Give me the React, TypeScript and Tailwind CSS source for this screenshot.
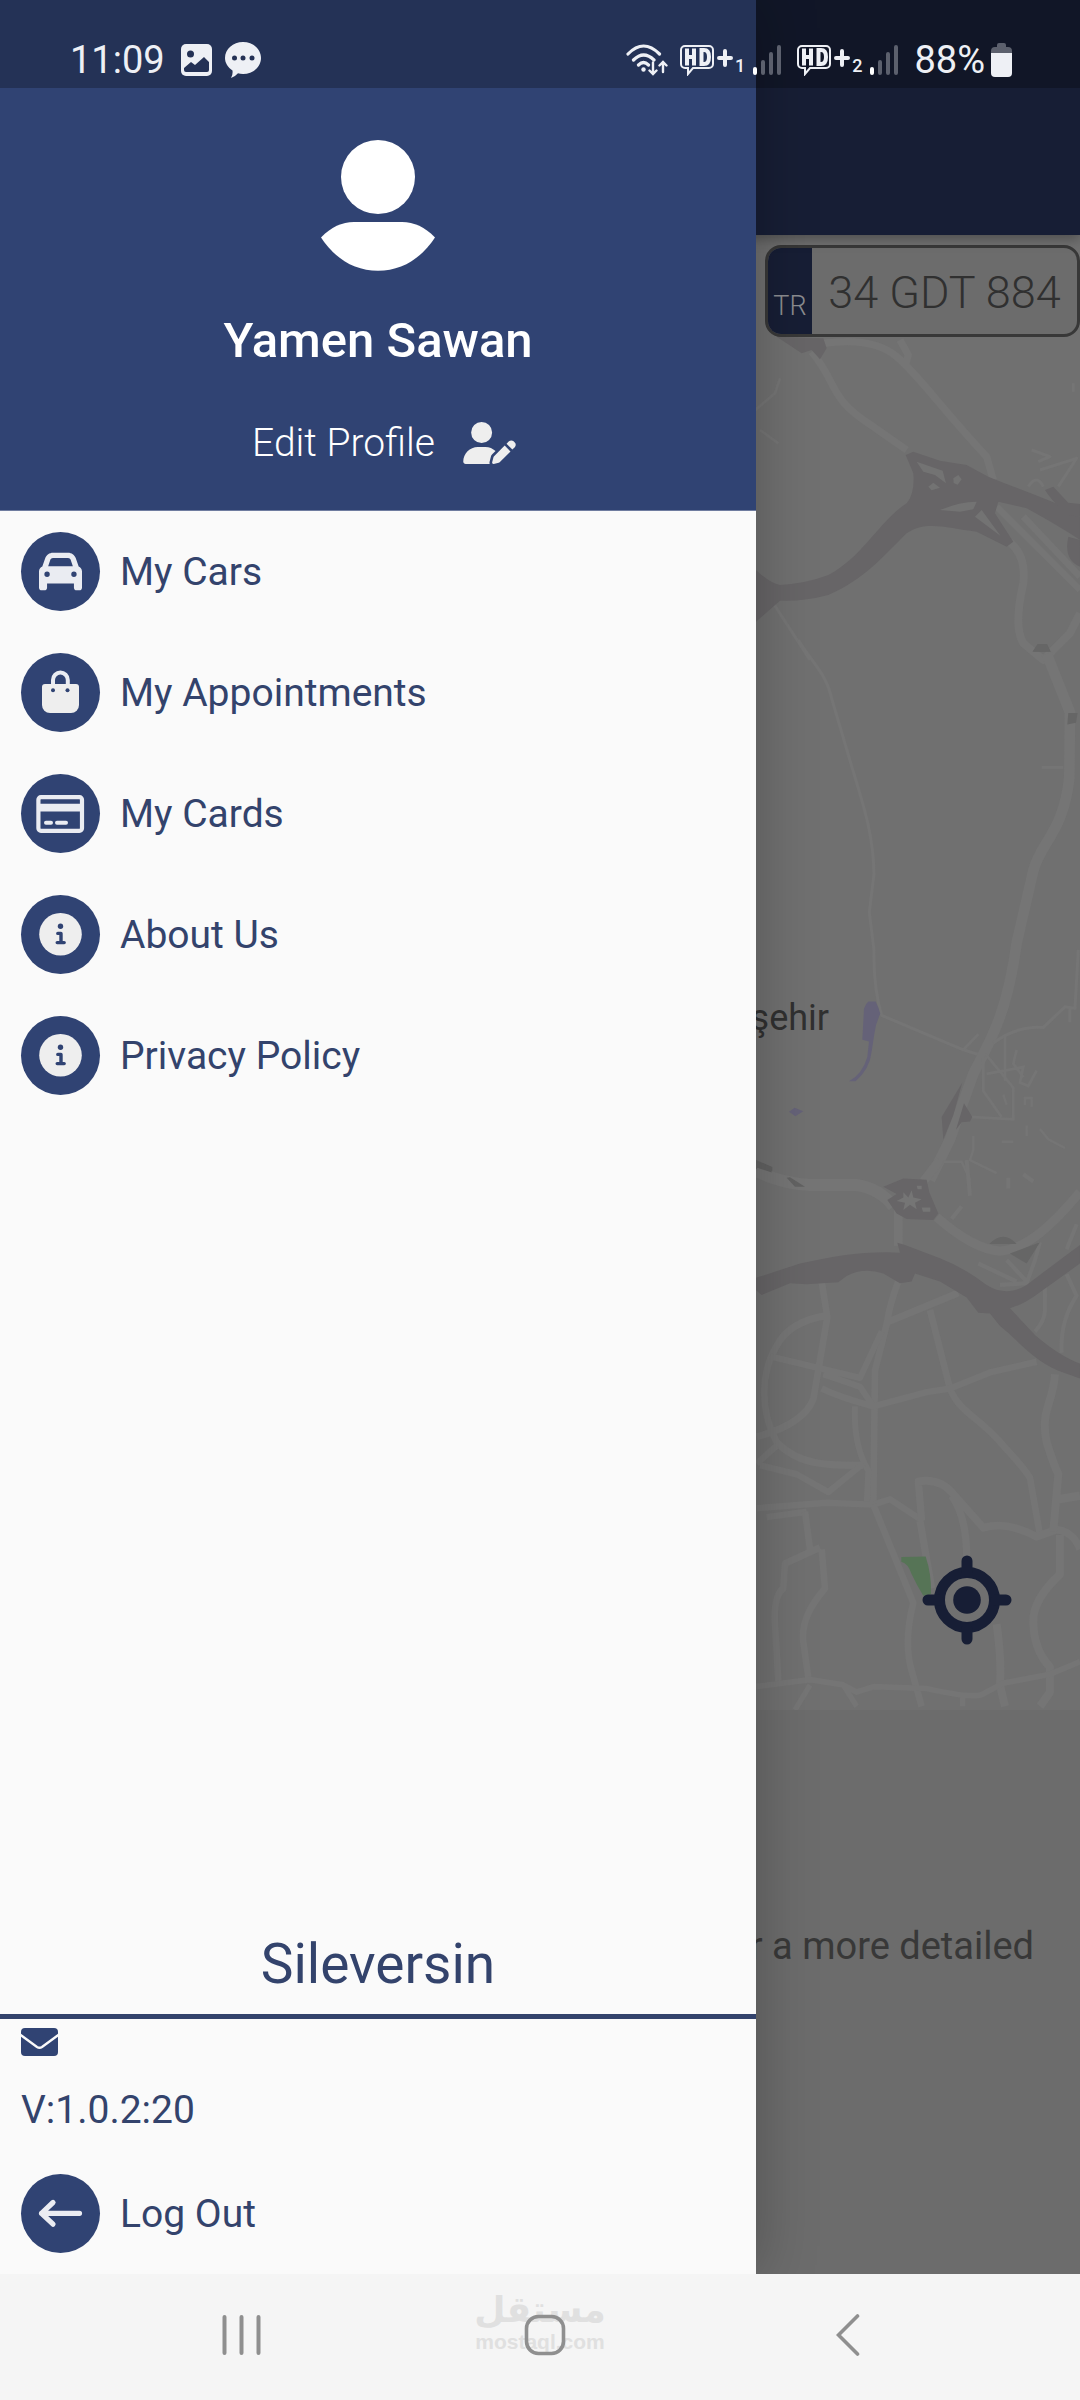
import type { ReactNode } from 'react';
import { FaCar, FaUserPen } from 'react-icons/fa6';

interface MenuItem {
  label: string;
  icon: ReactNode;
}

function BagIcon() {
  return (
    <svg viewBox="0 0 79 79" className="h-full w-full" aria-hidden="true">
      <path d="M32 33V27a7.4 7.4 0 0 1 14.8 0v6" fill="none" stroke="#eaecf2" strokeWidth="4" />
      <path d="M24 31h31a3 3 0 0 1 3 3v18a8 8 0 0 1-8 8H29a8 8 0 0 1-8-8V34a3 3 0 0 1 3-3z" fill="#eee" />
      <circle cx="32" cy="37.3" r="2" fill="#304373" />
      <circle cx="46.5" cy="37.3" r="2" fill="#304373" />
    </svg>
  );
}

function CardIcon() {
  return (
    <svg viewBox="0 0 79 79" className="h-full w-full" aria-hidden="true">
      <rect x="17.4" y="23.2" width="43.6" height="33.6" rx="2.5" fill="none" stroke="#eaecf2" strokeWidth="4.2" />
      <path d="M18 29.8h43v7.8H18z" fill="#eaecf2" />
      <path d="M25 48.8h5M36 48.8h9" stroke="#eaecf2" strokeWidth="4" strokeLinecap="round" />
    </svg>
  );
}

function InfoIcon() {
  return (
    <svg viewBox="0 0 79 79" className="h-full w-full" aria-hidden="true">
      <circle cx="39.5" cy="39.2" r="21.3" fill="#eee" />
      <circle cx="39.5" cy="31.3" r="2.7" fill="#304373" />
      <path
        d="M36.8 38.4h3.2v9M36.2 47.6h7"
        fill="none" stroke="#304373" strokeWidth="3.4"
        strokeLinecap="round" strokeLinejoin="round"
      />
    </svg>
  );
}

function BackArrowIcon() {
  return (
    <svg viewBox="0 0 79 79" className="h-full w-full" aria-hidden="true">
      <path
        d="M58.5 39.3H20.5M32 28.5L20.5 39.3L32 50.2"
        fill="none" stroke="#eaecf2" strokeWidth="5.2"
        strokeLinecap="round" strokeLinejoin="round"
      />
    </svg>
  );
}

const menuItems: MenuItem[] = [
  { label: 'My Cars', icon: <FaCar className="h-[43px] w-[43px] text-[#eaecf2]" /> },
  { label: 'My Appointments', icon: <BagIcon /> },
  { label: 'My Cards', icon: <CardIcon /> },
  { label: 'About Us', icon: <InfoIcon /> },
  { label: 'Privacy Policy', icon: <InfoIcon /> },
];

function MenuButton({ label, icon }: MenuItem) {
  return (
    <button className="flex items-center gap-5 text-left text-[39px] leading-[48px] text-[#33436c]">
      <span className="flex h-[79px] w-[79px] shrink-0 items-center justify-center rounded-full bg-[#304373]">
        {icon}
      </span>
      {label}
    </button>
  );
}

function SimSignal({ slot }: { slot: string }) {
  return (
    <div className="flex items-end">
      <svg viewBox="0 0 55 32" className="h-[32px] w-[55px]" aria-hidden="true">
        <path
          d="M5 2h24a4 4 0 0 1 4 4v14a4 4 0 0 1-4 4H13l-5 6v-6H5a4 4 0 0 1-4-4V6a4 4 0 0 1 4-4z"
          fill="none" stroke="#eef0f5" strokeWidth="2"
        />
        <path d="M7 4.500v17M14 4.500v17M7 13h7" stroke="#eef0f5" strokeWidth="4" />
        <path d="M21.500 6v14h2.500q5 0 5-7t-5-7z" fill="none" stroke="#eef0f5" strokeWidth="4" />
        <path d="M39 14h12M45 7v14" stroke="#eef0f5" strokeWidth="4" strokeLinecap="round" />
      </svg>
      <span className="text-[18px] font-medium leading-[20px]">{slot}</span>
      <svg viewBox="0 0 28 32" className="ml-2 h-[32px] w-[28px]" aria-hidden="true">
        <path d="M2 25v4" stroke="#fff" strokeWidth="4" strokeLinecap="round" />
        <path d="M10 18v11M18 10v19M26 3v26" stroke="#5c606d" strokeWidth="4" strokeLinecap="round" />
      </svg>
    </div>
  );
}

function StatusBar() {
  return (
    <div className="absolute inset-x-0 top-0 z-20 flex h-[88px] items-center justify-between bg-black/25 pl-[70px] pr-[68px] pt-8 text-[38px] leading-[44px] text-[#eef0f5]">
      <div className="flex items-center">
        <span className="mr-4">11:09</span>
        <svg viewBox="0 0 32 32" className="mr-3 h-[32px] w-[32px]" aria-hidden="true">
          <rect width="31" height="32" rx="5" fill="#eef0f5" />
          <circle cx="9.500" cy="10" r="3.500" fill="#243155" />
          <path d="M3 24l7-6 4 3 9-8 5 5v8q0 2-2 2H5q-2 0-2-2z" fill="#243155" />
        </svg>
        <svg viewBox="0 0 36 36" className="h-[36px] w-[36px]" aria-hidden="true">
          <path d="M18 0c10 0 18 7 18 16s-8 16-18 16q-3 0-5-.7-3 3.500-7 4.700 2-3 1.500-7.500C3 25.500 0 21 0 16 0 7 8 0 18 0z" fill="#eef0f5" />
          <circle cx="9.500" cy="16" r="2.500" fill="#243155" />
          <circle cx="18" cy="16" r="2.500" fill="#243155" />
          <circle cx="27" cy="16" r="2.500" fill="#243155" />
        </svg>
      </div>
      <div className="flex items-center">
        <svg viewBox="0 0 42 34" className="mr-3 h-[34px] w-[42px]" aria-hidden="true">
          <g fill="none" stroke="#eef0f5" strokeWidth="3.200" strokeLinecap="round">
            <path d="M2 11Q17.500-5 33.500 11M7.500 17Q17.500 7 28 17M12.500 22Q17.500 17 22.500 22" />
            <path d="M27 19.500v11M23.500 27.500l3.500 3.500 3.500-3.500M37 29v-10M33.500 22.500l3.500-3.500 3.500 3.500" strokeWidth="2.400" />
          </g>
          <circle cx="17.500" cy="26.500" r="2.200" fill="#eef0f5" />
        </svg>
        <div className="mr-4"><SimSignal slot="1" /></div>
        <SimSignal slot="2" />
        <span className="ml-4 mr-1.5">88%</span>
        <svg viewBox="0 0 21 34" className="h-[34px] w-[21px]" aria-hidden="true">
          <path d="M0 10V8q0-4 4-4h2V2q0-2 2-2h5q2 0 2 2v2h2q4 0 4 4v2z" fill="#5c606d" />
          <path d="M0 10h21v20q0 4-4 4H4q-4 0-4-4z" fill="#eef0f5" />
        </svg>
      </div>
    </div>
  );
}

function CityMap() {
  return (
    <svg viewBox="756 235 324 1475" className="ml-auto block w-[30%]" aria-hidden="true">
      {/* northern junction */}
      <g transform="translate(740 220) scale(.3333)" fill="none" strokeLinejoin="round">
        <g stroke="#757575">
          <path d="M215 395C300 500 260 530 400 620L500 690M250 370Q400 350 470 410C540 470 600 560 740 710L760 780M480 360L505 405 495 440" strokeWidth="22" />
          <path d="M40 575L105 520 120 475M60 630L115 670M1000 490V515" strokeWidth="8" />
          <path d="M100 1150L210 1320" strokeWidth="9" />
          <path d="M800 960Q860 1000 850 1090 820 1220 850 1270L910 1320 990 1240 1020 1180" strokeWidth="24" />
          <path d="M770 860L1020 1110M850 890L1020 1070" strokeWidth="20" />
          <path d="M875 690L930 710 895 725M900 750L1010 715 955 800M865 800q25-40 45 0" strokeWidth="9" />
        </g>
        <g fill="#676567">
          <path d="M48 1050Q90 1090 120 1095 200 1090 265 1065C370 1010 420 900 500 850Q525 820 520 760L497 705 520 695 600 722 680 735 745 770 790 788Q900 830 960 855L1020 890V960Q960 920 860 865L775 845 765 880 820 965 800 980 710 935C620 925 560 900 500 940 430 1010 370 1080 265 1125Q190 1145 120 1142L48 1205z" />
          <path d="M915 810L940 800 985 848 1020 852V890L985 885Q940 850 915 810zM985 950L1020 960V1040Q970 1020 985 950z" />
          <path d="M110 350L250 355 260 385 240 418 215 390 185 400z" />
          <path d="M893 1273h28l11 22h-54z" fill="#666" />
        </g>
        <g fill="#737373">
          <path d="M530 725L550 755 585 765 618 790 608 752zM565 800l15-12 20 15-25 8zM640 775l15-10 10 13-12 16-12-5z" />
          <path d="M600 870Q660 845 710 845L700 868 660 875zM705 890L725 870 782 948z" />
        </g>
      </g>

      {/* open land around the lake */}
      <g transform="translate(740 640) scale(.3333 .3444)" fill="none">
        <g stroke="#757575">
          <path d="M175 0C220 70 260 100 275 170L330 350C370 480 400 560 402 680L388 790 402 900Q400 1010 425 1090L670 1190 720 1205" strokeWidth="9" />
          <path d="M920 40L990 210 988 400C970 560 900 590 880 670L830 880C800 1100 740 1180 700 1260L630 1450 570 1568" strokeWidth="32" />
          <path d="M760 1170Q830 1120 910 1125L975 1065 1010 1070M990 1070V1110M1015 900L1005 1070" strokeWidth="9" />
          <path d="M730 1200V1310L785 1385M735 1200L820 1300V1392L690 1385M795 1150V1280M740 1260L850 1240 840 1285 865 1295 890 1250M830 1190L820 1230 850 1270M670 1190L715 1145M905 370H970" strokeWidth="8" />
          <path d="M700 1440V1480L690 1510 770 1548M610 1515H665L690 1568M860 1410V1440M790 1320L800 1350M785 1457H820M900 1420L925 1450 975 1475M855 1350V1330H875V1355" strokeWidth="7" />
        </g>
        <g fill="#676567">
          <path d="M667 1285L605 1385 610 1450 640 1380zM672 1345L697 1385 690 1398 665 1400 648 1422z" />
          <path d="M893 12h28l11 22h-54z M985 212h28l-5 28-26 5z" fill="#666" />
          <path d="M48 1510L97 1530V1548L48 1535z" fill="#626262" />
        </g>
        <path d="M385 1050h22q10 20 14 35-15 30-18 60l-8 50q-5 50-48 86h-20q40-20 55-70l5-45-20-5 5-90q5-15 13-21zM147 1370l17-12 26 10-24 15z" fill="#656278" />
      </g>

      {/* motorway and street grid */}
      <g transform="translate(740 1160) scale(.3333 .3571)" fill="none" strokeLinejoin="round">
        <g stroke="#757575">
          <path d="M48 30Q120 65 210 70H350Q420 80 460 130" strokeWidth="34" />
          <path d="M600 0L550 60M475 140V240M590 160Q700 250 780 255C860 250 940 180 1020 90" strokeWidth="26" />
          <path d="M245 340L262 440 220 670Q190 740 50 775M475 340Q450 400 440 460L405 590 400 960M440 455L655 372M570 420L630 640C660 710 720 720 790 800Q850 860 870 890L900 1050M265 435Q150 450 110 520C60 600 60 700 110 790 180 860 280 855 370 855" strokeWidth="20" />
          <path d="M90 550L360 610 425 480M245 640Q300 665 400 690L560 650 630 640 750 595 890 565M345 690Q340 800 385 870L380 970M250 600L360 635 400 690" strokeWidth="18" />
          <path d="M50 850L110 800M60 855L170 880 265 930 370 850M50 975L260 960 400 965 450 950 540 1005M80 1000L200 985" strokeWidth="18" />
          <path d="M400 965L520 1240Q490 1350 515 1430L545 1530M195 985L210 1090M240 1085L135 1130 130 1200Q100 1220 105 1300L115 1460M245 1090L255 1200Q180 1280 190 1350L205 1450" strokeWidth="20" />
          <path d="M540 1010L575 1200M545 1010L535 900Q600 890 640 935L730 1030Q800 1010 890 1055L950 1035Q1000 1040 1020 1090M635 940Q680 1000 680 1110" strokeWidth="22" />
          <path d="M945 600C940 680 900 700 920 790Q940 850 955 880L940 1040M955 950L1020 940M960 1050V1160Q880 1230 880 1290 880 1370 930 1420V1490L900 1530M770 1300Q785 1400 780 1470L795 1530" strokeWidth="24" />
          <path d="M48 1475L210 1455 310 1470 350 1490 400 1475 560 1480Q700 1510 730 1495L790 1465 930 1440 1020 1405M210 1470L165 1540M310 1470L350 1530M668 1500V1530" strokeWidth="16" />
          <path d="M915 350V420Q915 450 885 480M980 320L1010 380Q960 450 965 540M1010 180L980 250M900 230L885 280 860 345 780 350M860 340L800 280M715 290L830 340M635 165L665 130M680 0L690 100M805 50V80M850 40L880 60" strokeWidth="12" />
        </g>
        <g fill="#676567">
          <path d="M48 330L180 290C270 270 350 258 440 258L480 260 472 232 495 238 600 275Q670 300 740 350 800 385 860 350 930 300 1020 238V290L900 370Q850 405 810 415L885 490Q960 550 1020 570V612L955 590C870 555 830 500 780 465L750 430 715 428 680 385 600 340 525 318 515 340 480 345 430 318Q370 300 320 325L295 342 200 348 150 345 65 378 48 365z" />
          <path d="M430 75L490 52 560 55 568 90 595 150 580 168 500 165 470 150 442 112 470 95z" />
          <path d="M748 235Q790 195 830 235zM810 262L900 230 860 290z" fill="#666" />
          <path d="M48 5L95 20V35L48 20zM140 50L150 48 195 75 165 75z" fill="#626262" />
        </g>
        <path d="M490 90L505 105 515 85 520 105 545 110 525 120 530 138 510 125 490 140 495 120 470 115 490 105zM545 133h26v12h-22zM530 72h15v10h-12z" fill="#757575" />
        <path d="M484 1112L557 1110Q575 1160 573 1215L550 1220Q530 1190 515 1160 505 1130 484 1125z" fill="#567456" />
      </g>
    </svg>
  );
}

function MapPage() {
  return (
    <main className="flex flex-1 flex-col bg-[#6c6c6c]">
      <header className="relative z-10 h-[235px] bg-[#171e35] shadow-[0_4px_12px_rgba(0,0,0,0.3)]" />
      <section className="relative bg-[#707070]">
        <CityMap />
        <span className="absolute right-[251px] top-[761px] text-[36px] leading-[44px] text-[#303030]">
          Başakşehir
        </span>
        <div className="absolute right-0 top-[10px] flex h-[92px] w-[315px] overflow-hidden rounded-[16px] border-[3px] border-[#383838] bg-[#6c6c6c]">
          <span className="flex w-[44px] items-end justify-center bg-[#171e35] pb-3 text-[27px] font-light leading-[32px] text-[#8b8c90]">
            TR
          </span>
          <span className="flex flex-1 items-center justify-center pt-1 text-[45px] font-light leading-[52px] text-[#303030]">
            34 GDT 884
          </span>
        </div>
        <button aria-label="My location" className="absolute bottom-[65px] right-[68px] h-[90px] w-[90px]">
          <svg viewBox="0 0 90 90" className="h-full w-full">
            <circle cx="45" cy="45" r="27.500" fill="none" stroke="#171e35" strokeWidth="11" />
            <circle cx="45" cy="45" r="13.800" fill="#171e35" />
            <path d="M45 6v10M45 74v10M6 45h10M74 45h10" stroke="#171e35" strokeWidth="11" strokeLinecap="round" />
          </svg>
        </button>
      </section>
      <p className="pr-[46px] pt-[212px] text-right text-[38px] leading-[48px] text-[#383838]">
        for a more detailed
      </p>
    </main>
  );
}

function Drawer() {
  return (
    <aside className="absolute inset-y-0 left-0 z-10 flex w-[70%] flex-col bg-[#fafafa] shadow-[0_0_56px_rgba(0,0,0,0.25)]">
      <div className="flex h-[511px] flex-col items-center border-b border-[#6f7c9f] bg-[#304373] pt-[140px] text-white">
        <svg viewBox="321 140 114 131" className="h-[131px] w-[114px]" aria-hidden="true">
          <circle cx="378" cy="177" r="37" fill="#fff" />
          <path d="M321 237.500C331 227 342 222 354 222H402C414 222 425 227 435 237.500C421 259 401 270.800 378 270.800S335 259 321 237.500z" fill="#fff" />
        </svg>
        <h1 className="mt-10 text-[49px] font-medium leading-[60px]">Yamen Sawan</h1>
        <button className="ml-3 mt-12 flex items-center gap-7 text-[39px] font-light leading-[48px]">
          Edit Profile
          <FaUserPen className="h-[42px] w-[53px] text-[#eee]" />
        </button>
      </div>

      <nav className="flex flex-col gap-[42px] px-[21px] pt-[21px]">
        {menuItems.map((item) => (
          <MenuButton key={item.label} label={item.label} icon={item.icon} />
        ))}
      </nav>

      <footer className="mt-auto text-[#33436c]">
        <h2 className="border-b-[5px] border-[#33436c] pb-[14px] text-center text-[55px] leading-[72px]">Sileversin</h2>
        <div className="flex flex-col items-start px-[21px] pb-[21px] pt-[9px]">
          <svg viewBox="0 0 37 28" className="h-[28px] w-[37px]" aria-hidden="true">
            <rect width="37" height="28" rx="4" fill="#304373" />
            <path d="M-1 6.500L16 19q2.500 1.500 5 0L38 6.500" fill="none" stroke="#fafafa" strokeWidth="2.400" />
          </svg>
          <p className="mb-10 mt-[30px] text-[39px] leading-[48px]">V:1.0.2:20</p>
          <MenuButton label="Log Out" icon={<BackArrowIcon />} />
        </div>
      </footer>
    </aside>
  );
}

function SystemNav() {
  return (
    <nav className="relative z-30 grid h-[126px] grid-cols-3 place-items-center bg-[#f5f5f5] pb-[4px] pl-[91px] pr-[81px]">
      <div className="absolute inset-x-0 top-4 flex flex-col items-center text-[#e0e0e0]">
        <span dir="rtl" lang="ar" className="font-['DejaVu_Sans'] text-[36px] font-bold leading-[40px]">مستقل</span>
        <span className="font-['Liberation_Sans'] text-[21px] font-bold leading-[24px]">mostaql.com</span>
      </div>
      <button aria-label="Recent apps" className="relative">
        <svg viewBox="0 0 40 42" className="h-[42px] w-[40px]">
          <path d="M2.500 3v36M19.500 3v36M36.500 3v36" stroke="#8f8f8f" strokeWidth="4" strokeLinecap="round" />
        </svg>
      </button>
      <button aria-label="Home" className="relative">
        <svg viewBox="0 0 42 42" className="h-[42px] w-[42px]">
          <rect x="2.500" y="2.500" width="37" height="37" rx="12" fill="none" stroke="#8f8f8f" strokeWidth="3.600" />
        </svg>
      </button>
      <button aria-label="Back" className="relative">
        <svg viewBox="0 0 24 42" className="h-[42px] w-[24px]">
          <path d="M21.500 2L2.500 21L21.500 40" fill="none" stroke="#8f8f8f" strokeWidth="3.600" strokeLinecap="round" />
        </svg>
      </button>
    </nav>
  );
}

export default function App() {
  return (
    <div className="flex min-h-screen flex-col overflow-hidden font-['Roboto',sans-serif]">
      <div className="relative flex flex-1 flex-col">
        <MapPage />
        <Drawer />
        <StatusBar />
      </div>
      <SystemNav />
    </div>
  );
}
